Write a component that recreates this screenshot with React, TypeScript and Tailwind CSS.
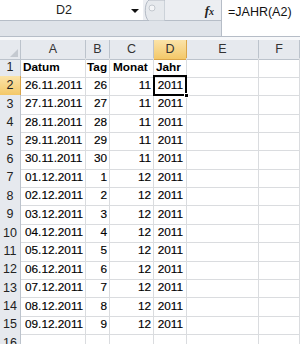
import React from 'react'

const font = { fontFamily: '"Liberation Sans", Arial, sans-serif' }

const cols = 'grid grid-cols-[21px_65px_24px_44px_33px_72px_1fr]'

const data: [string, number, number, number][] = [
  ['26.11.2011', 26, 11, 2011],
  ['27.11.2011', 27, 11, 2011],
  ['28.11.2011', 28, 11, 2011],
  ['29.11.2011', 29, 11, 2011],
  ['30.11.2011', 30, 11, 2011],
  ['01.12.2011', 1, 12, 2011],
  ['02.12.2011', 2, 12, 2011],
  ['03.12.2011', 3, 12, 2011],
  ['04.12.2011', 4, 12, 2011],
  ['05.12.2011', 5, 12, 2011],
  ['06.12.2011', 6, 12, 2011],
  ['07.12.2011', 7, 12, 2011],
  ['08.12.2011', 8, 12, 2011],
  ['09.12.2011', 9, 12, 2011],
]

function RowHead({ n, active }: { n: number; active?: boolean }) {
  return (
    <div
      className={`flex items-center justify-center border-r border-b text-[12.5px] text-[#222] ${
        active
          ? 'bg-gradient-to-b from-[#fbe3a8] to-[#f3c868] border-[#d9a54a]'
          : 'bg-[#e6e9ee] border-[#bcc3cc]'
      }`}
    >
      {n}
    </div>
  )
}

function Cell({ children, right, bold, pad = 'px-[3px]' }: { children?: React.ReactNode; right?: boolean; bold?: boolean; pad?: string }) {
  return (
    <div
      className={`flex items-center overflow-hidden whitespace-nowrap border-r border-b border-[#dadcdf] text-[11.8px] text-black ${pad} ${
        right ? 'justify-end' : 'justify-start'
      } ${bold ? 'font-bold' : '[-webkit-text-stroke:0.15px_#000]'}`}
    >
      {children}
    </div>
  )
}

export default function App() {
  return (
    <div className="w-[300px] h-[344px] overflow-hidden bg-white" style={font}>
      {/* Formula bar */}
      <div className="flex h-[37px] border-b border-[#b6bdc7]">
        <div className="flex flex-col w-[221px]">
          <div className="flex h-[21px] border-b border-[#b6bdc7]">
            <div className="relative w-[143px] bg-white flex items-center">
              <span className="w-[128px] text-center text-[12.5px] text-[#222]">D2</span>
              <span className="absolute left-[131px] top-[9px] w-0 h-0 border-l-[4px] border-r-[4px] border-t-[4px] border-l-transparent border-r-transparent border-t-[#111]" />
            </div>
            <div className="relative flex-1 bg-[#eceef2] flex items-center justify-end pr-[7px]">
              <svg className="absolute left-0 top-0" width="22" height="21" viewBox="0 0 22 21">
                <path d="M6 0 C1 3 1 18 6 21 L22 21 L22 0 Z" fill="#e6e9ed" stroke="#b3bac4" strokeWidth="1" />
                <circle cx="9" cy="8" r="3" fill="#f4f5f7" stroke="#c3c8cf" strokeWidth="1" />
              </svg>
              <span
                className="italic font-bold text-[13px] text-[#222] leading-none"
                style={{ fontFamily: '"Liberation Serif", serif' }}
              >
                f<span className="text-[10px]">x</span>
              </span>
            </div>
          </div>
          <div className="flex-1 bg-[#dfe3e9]" />
        </div>
        <div className="flex-1 border-l border-[#b6bdc7] bg-white pl-[6px] pt-[3px] text-[12.5px] text-[#111]">
          =JAHR(A2)
        </div>
      </div>
      <div className="h-[3px] bg-[#f7f8fa]" />

      {/* Column headers */}
      <div className={`${cols} h-[18px]`}>
        <div className="relative bg-[#e6e9ee] border-r border-b border-[#bcc3cc]">
          <span className="absolute right-[2px] bottom-[2px] w-0 h-0 border-l-[8px] border-b-[8px] border-l-transparent border-b-[#c4c9d0]" />
        </div>
        {['A', 'B', 'C', 'D', 'E', 'F'].map(c => (
          <div
            key={c}
            className={`flex items-center justify-center border-r border-b text-[12.5px] text-[#333] ${
              c === 'D'
                ? 'bg-gradient-to-b from-[#fbe3a8] to-[#f3c868] border-[#d9a54a]'
                : 'bg-[#e6e9ee] border-[#bcc3cc]'
            }`}
          >
            {c}
          </div>
        ))}
      </div>

      {/* Row 1 */}
      <div className={`${cols} h-[18.4px]`}>
        <RowHead n={1} />
        <Cell bold pad="px-[2px]">Datum</Cell>
        <Cell bold pad="px-[1px]">Tag</Cell>
        <Cell bold pad="px-[3px]">Monat</Cell>
        <Cell bold pad="px-[2px]">Jahr</Cell>
        <Cell />
        <Cell />
      </div>

      {data.map((r, i) => (
        <div key={i} className={`${cols} h-[18.4px]`}>
          <RowHead n={i + 2} active={i === 0} />
          <Cell pad="pl-[4px]">{r[0]}</Cell>
          <Cell right pad="pr-[2px]">{r[1]}</Cell>
          <Cell right pad="pr-[2px]">{r[2]}</Cell>
          {i === 0 ? (
            <div className="relative flex items-center justify-end pr-[3px] border-r border-b border-[#dadcdf] text-[11.8px] text-black [-webkit-text-stroke:0.15px_#000]">
              {r[3]}
              <span className="absolute -left-[1px] -top-[1px] -right-[1px] -bottom-[1px] border-2 border-black" />
              <span className="absolute -right-[3px] -bottom-[3px] w-[5px] h-[5px] bg-black border border-white" />
            </div>
          ) : (
            <Cell right pad="pr-[3px]">{r[3]}</Cell>
          )}
          <Cell />
          <Cell />
        </div>
      ))}

      {/* Row 16 */}
      <div className={`${cols} h-[18.4px]`}>
        <RowHead n={16} />
        <Cell />
        <Cell />
        <Cell />
        <Cell />
        <Cell />
        <Cell />
      </div>
    </div>
  )
}
